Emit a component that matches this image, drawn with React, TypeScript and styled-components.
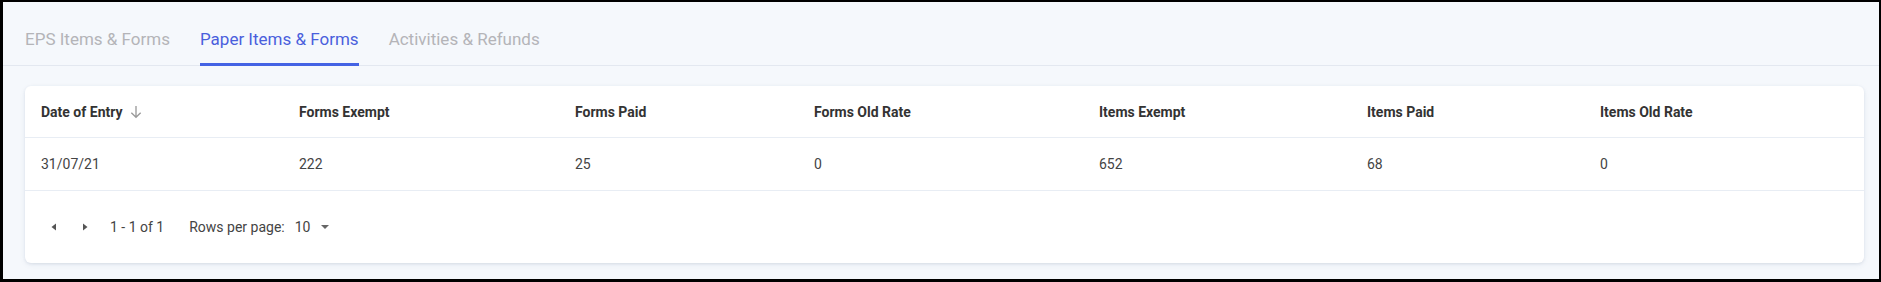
import React from "react";
import styled, { createGlobalStyle } from "styled-components";

const Global = createGlobalStyle`
  html, body { margin: 0; padding: 0; }
  body { font-family: Roboto, "Noto Sans", Arial, sans-serif; background: #000; }
  * { box-sizing: border-box; }
`;

const Frame = styled.div`
  width: 1881px;
  height: 282px;
  border: 2px solid #000;
  border-left-width: 3px;
  border-bottom-width: 3px;
  background: #f5f8fc;
  display: flex;
  flex-direction: column;
  overflow: hidden;
`;

const TabBar = styled.div`
  display: flex;
  gap: 30px;
  padding: 25px 0 0 22px;
  border-bottom: 1px solid #e3e8f0;
`;

const Tab = styled.div<{ $active?: boolean }>`
  font-size: 17px;
  line-height: 24px;
  padding-bottom: 12px;
  color: ${(p) => (p.$active ? "#4a5fdc" : "#b4b4b8")};
  border-bottom: 3px solid ${(p) => (p.$active ? "#4463e4" : "transparent")};
  margin-bottom: -1px;
  cursor: pointer;
`;

const Card = styled.div`
  margin: 20px 15px 0 22px;
  background: #fff;
  border-radius: 6px;
  box-shadow: 0 1px 3px rgba(60, 80, 120, 0.12), 0 2px 6px rgba(60, 80, 120, 0.06);
`;

const Row = styled.div<{ $head?: boolean }>`
  display: grid;
  grid-template-columns: 258px 276px 239px 285px 268px 233px 1fr;
  height: ${(p) => (p.$head ? "52px" : "53px")};
  align-items: center;
  border-bottom: 1px solid #e8edf4;
`;

const HeadCell = styled.div`
  padding-left: 16px;
  font-size: 14px;
  font-weight: 700;
  color: #333;
  display: flex;
  align-items: center;
  gap: 5px;
`;

const Cell = styled.div`
  padding-left: 16px;
  font-size: 14px;
  color: #444;
`;

const Footer = styled.div`
  height: 72px;
  display: flex;
  align-items: center;
  padding-left: 21px;
  font-size: 14px;
  color: #444;
`;

const ArrowBtn = styled.button`
  border: none;
  background: none;
  padding: 0;
  width: 16px;
  height: 16px;
  margin-right: 15px;
  display: flex;
  align-items: center;
  justify-content: center;
  cursor: pointer;
`;

const Range = styled.span`
  margin-left: 2px;
  margin-right: 25px;
`;

const PerPage = styled.span`
  display: flex;
  align-items: center;
  gap: 10px;
`;

const Select = styled.span`
  display: flex;
  align-items: center;
  gap: 10px;
`;

const headers = [
  "Date of Entry",
  "Forms Exempt",
  "Forms Paid",
  "Forms Old Rate",
  "Items Exempt",
  "Items Paid",
  "Items Old Rate",
];
const data = ["31/07/21", "222", "25", "0", "652", "68", "0"];

const SortArrow = () => (
  <svg width="16" height="16" viewBox="0 0 24 24" fill="none">
    <path d="M12 3v17M5 13l7 7 7-7" stroke="#9a9a9a" strokeWidth="2" />
  </svg>
);

const Tri = ({ dir }: { dir: "l" | "r" | "d" }) => (
  <svg width="10" height="10" viewBox="0 0 10 10">
    {dir === "l" && <path d="M7 1.5 L7 8.5 L2.5 5 Z" fill="#555" />}
    {dir === "r" && <path d="M3 1.5 L3 8.5 L7.5 5 Z" fill="#555" />}
    {dir === "d" && <path d="M1 3 L9 3 L5 7 Z" fill="#666" />}
  </svg>
);

export default function App() {
  return (
    <>
      <Global />
      <Frame>
        <TabBar>
          <Tab>EPS Items &amp; Forms</Tab>
          <Tab $active>Paper Items &amp; Forms</Tab>
          <Tab>Activities &amp; Refunds</Tab>
        </TabBar>
        <Card>
          <Row $head>
            {headers.map((h, i) => (
              <HeadCell key={h}>
                {h}
                {i === 0 && <SortArrow />}
              </HeadCell>
            ))}
          </Row>
          <Row>
            {data.map((d, i) => (
              <Cell key={i}>{d}</Cell>
            ))}
          </Row>
          <Footer>
            <ArrowBtn aria-label="previous">
              <Tri dir="l" />
            </ArrowBtn>
            <ArrowBtn aria-label="next">
              <Tri dir="r" />
            </ArrowBtn>
            <Range>1 - 1 of 1</Range>
            <PerPage>
              Rows per page:
              <Select>
                10 <Tri dir="d" />
              </Select>
            </PerPage>
          </Footer>
        </Card>
      </Frame>
    </>
  );
}
